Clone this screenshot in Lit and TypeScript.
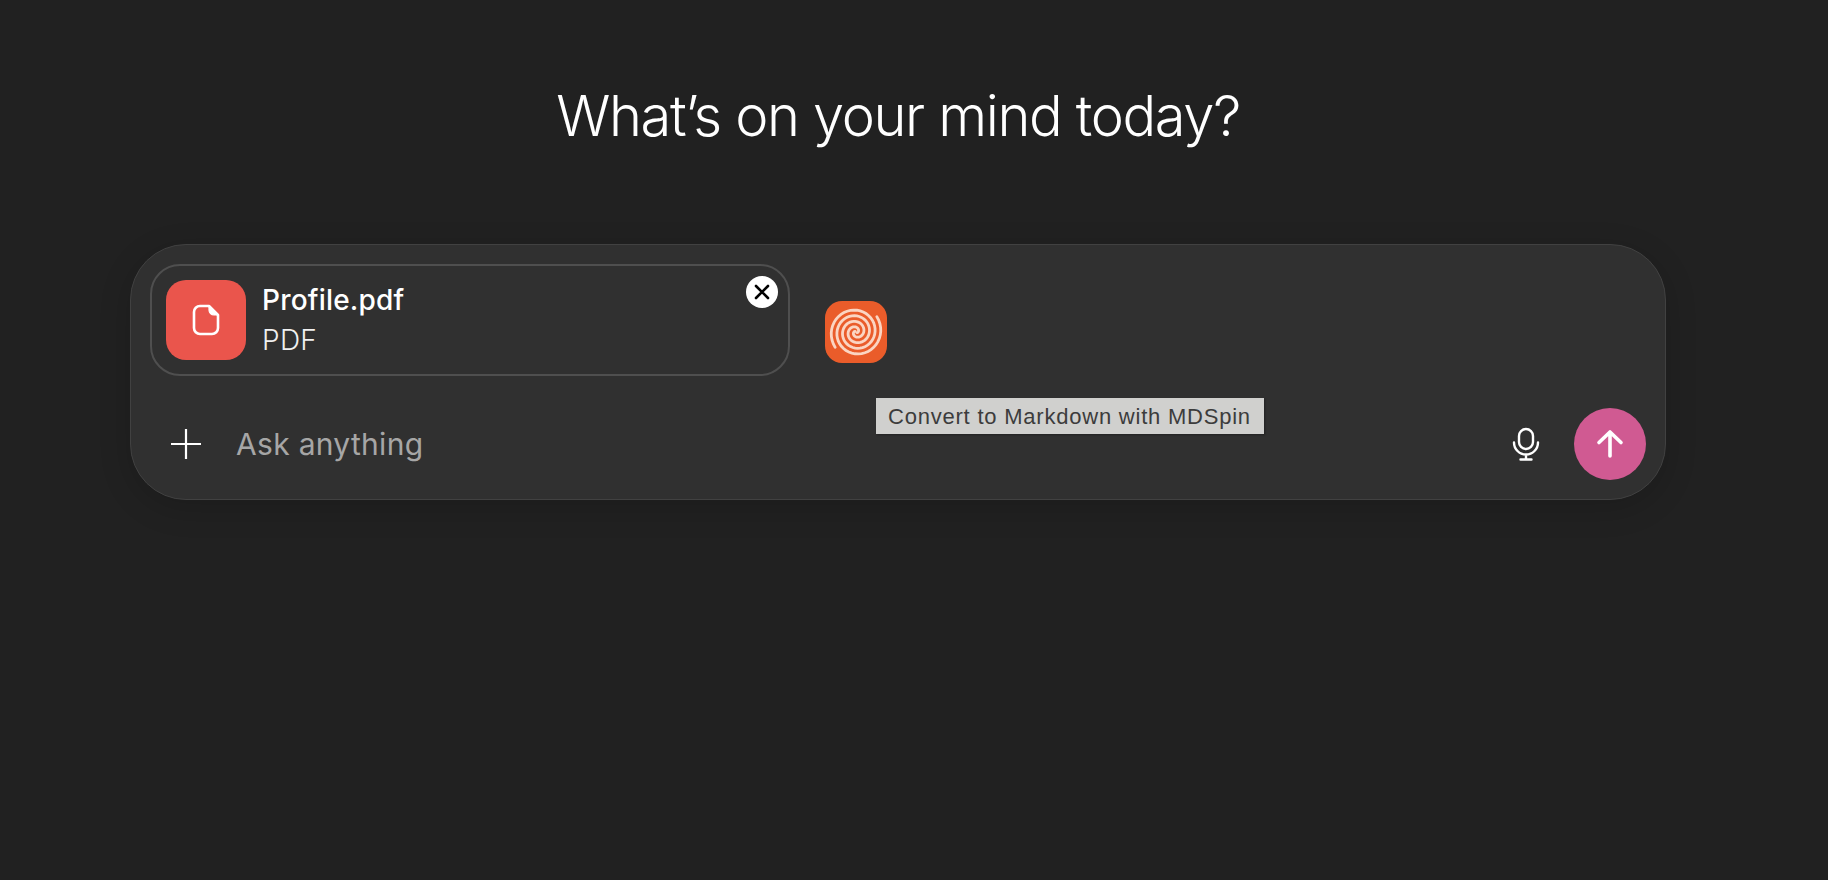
import { LitElement, html, css, svg } from 'lit';
import { customElement } from 'lit/decorators.js';

// two arm spiral for the MDSpin logo, centred on 31,31
function spiralArm(offset: number): string {
  const pts: string[] = [];
  for (let t = 0; t <= 4.4 * Math.PI; t += 0.15) {
    const r = 1 + t * 1.8;
    const a = offset - t;
    pts.push(`${(31 + r * Math.cos(a)).toFixed(2)} ${(31 + r * Math.sin(a)).toFixed(2)}`);
  }
  return 'M' + pts.join(' L');
}

@customElement('app-root')
export class AppRoot extends LitElement {
  static override styles = css`
    :host {
      display: block;
      min-height: 880px;
      background: #212121;
      font-family: Inter, 'Noto Sans', sans-serif;
      color: #fff;
    }

    .page {
      display: flex;
      flex-direction: column;
      align-items: center;
      padding: 80px 32px 0 0;
    }

    h1 {
      margin: 0 0 92px;
      font-size: 56px;
      line-height: 72px;
      font-weight: 350;
      letter-spacing: -1.36px;
    }

    .composer {
      position: relative;
      box-sizing: border-box;
      width: 1536px;
      padding: 19px;
      background: #303030;
      border: 1px solid #414141;
      border-radius: 56px;
      box-shadow: 0 8px 32px rgba(0, 0, 0, 0.16);
    }

    .attachment {
      position: relative;
      box-sizing: border-box;
      display: flex;
      align-items: center;
      gap: 16px;
      width: 640px;
      height: 112px;
      padding: 0 14px;
      border: 2px solid #4f4f4f;
      border-radius: 30px;
    }

    .file-icon {
      display: flex;
      align-items: center;
      justify-content: center;
      width: 80px;
      height: 80px;
      border-radius: 20px;
      background: #ea554c;
    }

    .name {
      font-size: 28px;
      line-height: 40px;
      font-weight: 500;
      letter-spacing: 0.2px;
    }

    .kind {
      font-size: 28px;
      line-height: 40px;
      font-weight: 300;
      letter-spacing: 0.3px;
      color: #f0f0f0;
    }

    .remove {
      position: absolute;
      top: 10px;
      right: 10px;
      display: flex;
      align-items: center;
      justify-content: center;
      width: 32px;
      height: 32px;
      border-radius: 50%;
      background: #fff;
    }

    .input-row {
      display: flex;
      align-items: center;
      margin-top: 32px;
      height: 72px;
    }

    .plus {
      display: block;
      margin-left: 21px;
    }

    .placeholder {
      flex: 1;
      margin-left: 35px;
      font-size: 30px;
      letter-spacing: 0.3px;
      color: #a6a6a6;
    }

    .mic {
      display: block;
      margin-right: 34px;
    }

    .send {
      display: flex;
      align-items: center;
      justify-content: center;
      width: 72px;
      height: 72px;
      border-radius: 50%;
      background: #d05a92;
    }

    .mdspin {
      position: absolute;
      left: 694px;
      top: 56px;
      display: block;
    }

    .tooltip {
      position: absolute;
      left: 745px;
      top: 153px;
      box-sizing: border-box;
      height: 36px;
      width: 388px;
      padding: 0 12px;
      background: #d0d0ce;
      color: #3c3c3c;
      font-family: 'Liberation Sans', Arial, sans-serif;
      font-size: 22px;
      line-height: 37px;
      letter-spacing: 0.78px;
      white-space: nowrap;
      box-shadow: 1px 1px 2px rgba(0, 0, 0, 0.3);
    }
  `;

  override render() {
    return html`
      <div class="page">
        <h1>What’s on your mind today?</h1>
        <div class="composer">
          <div class="attachment">
            <div class="file-icon">
              <svg width="28" height="32" viewBox="0 0 28 32" fill="none" stroke="#fff" stroke-width="2.6" stroke-linejoin="round" stroke-linecap="round">
                <path d="M17 2H8a6 6 0 0 0-6 6v16a6 6 0 0 0 6 6h12a6 6 0 0 0 6-6V11z"/>
                <path d="M17 2v4a5 5 0 0 0 5 5h4z" fill="#fff" stroke-width="1.2"/>
              </svg>
            </div>
            <div>
              <div class="name">Profile.pdf</div>
              <div class="kind">PDF</div>
            </div>
            <div class="remove">
              <svg width="16" height="16" viewBox="0 0 16 16" fill="none" stroke="#000" stroke-width="2.6" stroke-linecap="round">
                <path d="M2 2l12 12M14 2L2 14"/>
              </svg>
            </div>
          </div>
          <div class="input-row">
            <svg class="plus" width="30" height="30" viewBox="0 0 30 30" fill="none" stroke="#fff" stroke-width="2.2">
              <path d="M15 0v30M0 15h30"/>
            </svg>
            <div class="placeholder">Ask anything</div>
            <svg class="mic" width="28" height="34" viewBox="0 0 28 34" fill="none" stroke="#fff" stroke-width="2.4" stroke-linecap="round">
              <rect x="7" y="2" width="14" height="20" rx="7"/>
              <path d="M2 15.500a12 12 0 0 0 24 0M14 27.500v4.500M8.500 32.500h11"/>
            </svg>
            <div class="send">
              <svg width="28" height="30" viewBox="0 0 28 30" fill="none" stroke="#fff" stroke-width="3.6" stroke-linecap="round" stroke-linejoin="round">
                <path d="M14 27V3M3 13.500L14 3l11 10.500"/>
              </svg>
            </div>
          </div>
          <svg class="mdspin" width="62" height="62" viewBox="0 0 62 62">
            <defs>
              <filter id="soft"><feGaussianBlur stdDeviation="0.7"/></filter>
              <clipPath id="tile"><rect width="62" height="62" rx="16"/></clipPath>
            </defs>
            <rect width="62" height="62" rx="17" fill="#ea5c2a"/>
            <g clip-path="url(#tile)" filter="url(#soft)" fill="none" stroke="#fbd5c2" stroke-width="2.8" stroke-linecap="round">
              ${svg`<path d=${spiralArm(0.6)}/><path d=${spiralArm(0.6 + Math.PI)}/>`}
            </g>
          </svg>
          <div class="tooltip">Convert to Markdown with MDSpin</div>
        </div>
      </div>
    `;
  }
}
